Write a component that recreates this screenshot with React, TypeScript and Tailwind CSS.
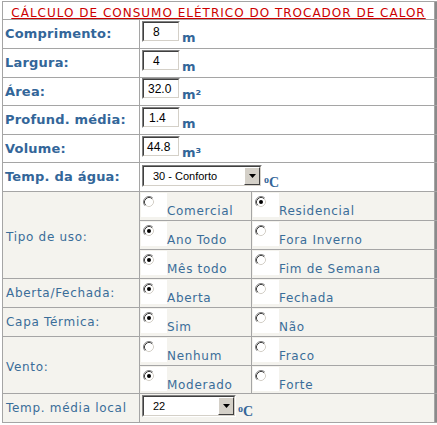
import React from "react";

const BLUE = "text-[#336699]";

function Radio({ checked }: { checked?: boolean }) {
  return (
    <svg width="12" height="12" viewBox="0 0 12 12" className="block">
      <circle cx="6" cy="6" r="5.5" fill="#ffffff" />
      <path d="M2.11 9.89 A5.5 5.5 0 0 1 9.89 2.11" fill="none" stroke="#808080" strokeWidth="1" />
      <path d="M9.89 2.11 A5.5 5.5 0 0 1 2.11 9.89" fill="none" stroke="#ffffff" strokeWidth="1" />
      <path d="M2.82 9.18 A4.5 4.5 0 0 1 9.18 2.82" fill="none" stroke="#404040" strokeWidth="1" />
      <path d="M9.18 2.82 A4.5 4.5 0 0 1 2.82 9.18" fill="none" stroke="#d4d0c8" strokeWidth="1" />
      {checked && <circle cx="6" cy="6" r="2" fill="#000000" />}
    </svg>
  );
}

function RadioCell({ label, checked }: { label: string; checked?: boolean }) {
  return (
    <div className="flex items-start bg-[#f4f3ee]">
      <div className="mt-[1px] ml-[1px] h-[24px] w-[26px] shrink-0 bg-white pl-[2px] pt-[3px]">
        <Radio checked={checked} />
      </div>
      <span className="mt-[12px] whitespace-nowrap text-[12px] leading-[14px] tracking-[0.7px] text-[#3a6d99] [font-family:'DejaVu_Sans',sans-serif]">
        {label}
      </span>
    </div>
  );
}

function Strip() {
  return <div className="bg-[#8a8a8a]" />;
}

function TextBox({ value, pad }: { value: string; pad: string }) {
  return (
    <div className="h-[21px] w-[38px] border border-b-white border-l-[#808080] border-r-white border-t-[#808080]">
      <div
        className={`flex h-full w-full items-center border border-b-[#d4d0c8] border-l-[#404040] border-r-[#d4d0c8] border-t-[#404040] bg-white text-[12px] text-black [font-family:'Liberation_Sans',Arial,sans-serif] ${pad}`}
      >
        {value}
      </div>
    </div>
  );
}

function DropButton() {
  return (
    <div className="flex h-full w-[16px] items-center justify-center border border-b-[#404040] border-l-[#ffffff] border-r-[#404040] border-t-[#ffffff] bg-[#d4d0c8]">
      <svg width="7" height="4" viewBox="0 0 7 4" className="block">
        <path d="M0 0 H7 L3.5 4 Z" fill="#000000" />
      </svg>
    </div>
  );
}

function SelectBox({ value, width }: { value: string; width: string }) {
  return (
    <div className={`h-[22px] border border-b-white border-l-[#808080] border-r-white border-t-[#808080] ${width}`}>
      <div className="flex h-full w-full border border-b-[#d4d0c8] border-l-[#404040] border-r-[#d4d0c8] border-t-[#404040] bg-white">
        <div className="flex flex-1 items-center pl-[9px] text-[11px] text-black [font-family:'Liberation_Sans',Arial,sans-serif]">
          {value}
        </div>
        <DropButton />
      </div>
    </div>
  );
}

function Celsius() {
  return (
    <span className={`ml-[2px] flex items-start font-bold ${BLUE} [font-family:'Liberation_Serif',serif]`}>
      <span className="mt-[-1px] text-[10px] leading-[10px]">o</span>
      <span className="text-[14px] leading-[13px]">C</span>
    </span>
  );
}

function BoldLabel({ children }: { children: React.ReactNode }) {
  return (
    <div className={`flex items-center bg-white pl-[2px] text-[13px] font-bold tracking-[0.2px] ${BLUE} [font-family:'DejaVu_Sans',sans-serif]`}>
      {children}
    </div>
  );
}

function Label({ children, extra = "" }: { children: React.ReactNode; extra?: string }) {
  return (
    <div className={`flex items-center whitespace-nowrap bg-[#f4f3ee] pl-[3px] text-[12px] tracking-[0.7px] text-[#3a6d99] [font-family:'DejaVu_Sans',sans-serif] ${extra}`}>
      {children}
    </div>
  );
}

function InputRow({ value, unit, pad, top = "pt-[1px]" }: { value: string; unit: string; pad: string; top?: string }) {
  return (
    <div className={`col-span-2 flex items-start bg-white pl-[2px] ${top}`}>
      <TextBox value={value} pad={pad} />
      <span className={`ml-[2px] mt-[9px] text-[13px] font-bold leading-[15px] ${BLUE} [font-family:'DejaVu_Sans',sans-serif]`}>
        {unit}
      </span>
    </div>
  );
}

export default function App() {
  return (
    <div className="min-h-[425px] bg-white pl-[2px] pt-[1px]">
      <div className="grid w-[435px] grid-cols-[136px_111px_182px_2px] grid-rows-[17px_28px_28px_27px_28px_27px_28px_28px_28px_28px_28px_28px_28px_27px_28px] gap-px bg-[#a5a5a5] py-px pl-px">
        <div className="col-span-3 flex items-end justify-center bg-white">
          <span className="text-[12px] leading-[12px] tracking-[1px] text-[#cc0000] underline [font-family:'DejaVu_Sans',sans-serif]">
            CÁLCULO DE CONSUMO ELÉTRICO DO TROCADOR DE CALOR
          </span>
        </div>
        <Strip />

        <BoldLabel>Comprimento:</BoldLabel>
        <InputRow value="8" unit="m" pad="pl-[9px]" />
        <Strip />

        <BoldLabel>Largura:</BoldLabel>
        <InputRow value="4" unit="m" pad="pl-[9px]" />
        <Strip />

        <BoldLabel>Área:</BoldLabel>
        <InputRow value="32.0" unit="m²" pad="pl-[4px]" top="pt-0" />
        <Strip />

        <BoldLabel>Profund. média:</BoldLabel>
        <InputRow value="1.4" unit="m" pad="pl-[5px]" />
        <Strip />

        <BoldLabel>Volume:</BoldLabel>
        <InputRow value="44.8" unit="m³" pad="pl-[3px]" />
        <Strip />

        <BoldLabel>Temp. da água:</BoldLabel>
        <div className="col-span-2 flex items-start bg-white pl-[2px] pt-[2px]">
          <SelectBox value="30 - Conforto" width="w-[120px]" />
          <span className="mt-[11px]">
            <Celsius />
          </span>
        </div>
        <Strip />

        <Label extra="row-span-3 pt-[3px]">Tipo de uso:</Label>
        <RadioCell label="Comercial" />
        <RadioCell label="Residencial" checked />
        <Strip />
        <RadioCell label="Ano Todo" checked />
        <RadioCell label="Fora Inverno" />
        <Strip />
        <RadioCell label="Mês todo" checked />
        <RadioCell label="Fim de Semana" />
        <Strip />

        <Label>Aberta/Fechada:</Label>
        <RadioCell label="Aberta" checked />
        <RadioCell label="Fechada" />
        <Strip />

        <Label>Capa Térmica:</Label>
        <RadioCell label="Sim" checked />
        <RadioCell label="Não" />
        <Strip />

        <Label extra="row-span-2 pt-[4px]">Vento:</Label>
        <RadioCell label="Nenhum" />
        <RadioCell label="Fraco" />
        <Strip />
        <RadioCell label="Moderado" checked />
        <RadioCell label="Forte" />
        <Strip />

        <Label>Temp. média local</Label>
        <div className="col-span-2 flex items-start bg-[#f4f3ee] pl-[2px] pt-[1px]">
          <SelectBox value="22" width="w-[94px]" />
          <span className="mt-[10px]">
            <Celsius />
          </span>
        </div>
        <Strip />
      </div>
    </div>
  );
}
